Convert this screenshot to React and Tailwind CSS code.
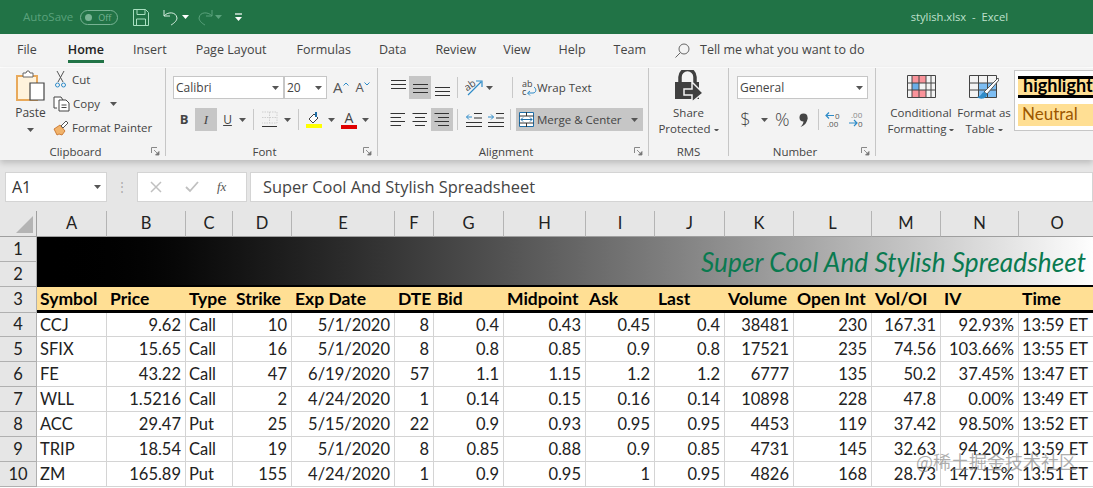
const UI = "font-['Open_Sans',sans-serif]";
const COLS = ['A','B','C','D','E','F','G','H','I','J','K','L','M','N','O'];
const HEAD = ['Symbol','Price','Type','Strike','Exp Date','DTE','Bid','Midpoint','Ask','Last','Volume','Open Int','Vol/OI','IV','Time'];
const ROWS = [
  ['CCJ','9.62','Call','10','5/1/2020','8','0.4','0.43','0.45','0.4','38481','230','167.31','92.93%','13:59 ET'],
  ['SFIX','15.65','Call','16','5/1/2020','8','0.8','0.85','0.9','0.8','17521','235','74.56','103.66%','13:55 ET'],
  ['FE','43.22','Call','47','6/19/2020','57','1.1','1.15','1.2','1.2','6777','135','50.2','37.45%','13:47 ET'],
  ['WLL','1.5216','Call','2','4/24/2020','1','0.14','0.15','0.16','0.14','10898','228','47.8','0.00%','13:49 ET'],
  ['ACC','29.47','Put','25','5/15/2020','22','0.9','0.93','0.95','0.95','4453','119','37.42','98.50%','13:52 ET'],
  ['TRIP','18.54','Call','19','5/1/2020','8','0.85','0.88','0.9','0.85','4731','145','32.63','94.20%','13:59 ET'],
  ['ZM','165.89','Put','155','4/24/2020','1','0.9','0.95','1','0.95','4826','168','28.73','147.15%','13:51 ET'],
];
const LEFT = new Set([0, 2, 14]);

const Caret = ({ className = '', color = '#555', w = 7 }) => (
  <svg width={w} height={(w * 4) / 7} viewBox="0 0 7 4" className={className}><path d="M0 0h7L3.500 4z" fill={color} /></svg>
);
const Launcher = () => (
  <svg width="9" height="9" viewBox="0 0 9 9" className="shrink-0"><path d="M.5 6V.5H6" fill="none" stroke="#888" /><path d="M3 3l4 4M8 4.500V8H4.500z" fill="#777" stroke="#777" strokeWidth=".8" /></svg>
);
const Sep = ({ h = 'h-[21px]' }) => <div className={`w-px ${h} bg-[#c8c8c8] shrink-0`} />;

function Lines({ widths, dy = 5 }) {
  return (
    <svg width="16" height="16" viewBox="0 0 16 16">
      {widths.map(([a, b], i) => <path key={i} d={`M${a} ${i * dy + 1.5}H${b}`} stroke="#333" strokeWidth="1" />)}
    </svg>
  );
}
const VLines = ({ off }) => (
  <svg width="15" height="20" viewBox="0 0 15 20">
    {[0, 1, 2].map((i) => <path key={i} d={`M0 ${off + i * 4 + .5}H15`} stroke="#333" strokeWidth="1" />)}
  </svg>
);
const HL = ({ children, on, w = 'w-[22px]' }) => (
  <div className={`${w} h-[23px] flex items-center justify-center shrink-0 ${on ? 'bg-[#c6c6c6]' : ''}`}>{children}</div>
);

function Group({ w, label, launcher, children }) {
  return (
    <div className={`${w} shrink-0 h-[88px] flex flex-col border-r border-[#c6c6c6]`}>
      <div className="flex-1 min-h-0">{children}</div>
      <div className="h-[9px] flex items-center">
        <div className="flex-1 text-center text-[11.5px] leading-none text-[#444]">{label}</div>
        {launcher && <div className="pr-[5px] flex items-center"><Launcher /></div>}
      </div>
    </div>
  );
}

function Clipboard() {
  return (
    <Group w="w-[166px]" label="Clipboard" launcher>
      <div className="flex pt-[2px]">
        <div className="w-[55px] pl-[15px] flex flex-col">
          <svg width="31" height="33" viewBox="0 0 31 33">
            <path d="M2 6h20v24H2z" fill="#fff3dc" stroke="#e8a95b" strokeWidth="2" />
            <path d="M8 6V3h3l1-2h2l1 2h3v4H8z" fill="#fff" stroke="#666" />
            <path d="M15 13h14v17H15z" fill="#fff" stroke="#444" strokeWidth="1.200" />
          </svg>
          <div className="w-[31px] text-center text-[12px] leading-none mt-[4px] text-[#444] whitespace-nowrap">Paste</div>
          <div className="w-[31px] flex justify-center mt-[9px]"><Caret /></div>
        </div>
        <div className="flex flex-col gap-[7px] text-[11.5px] leading-none text-[#444] pt-[1px]">
          <div className="h-[17px] flex items-center gap-[6px]">
            <svg width="11" height="17" viewBox="0 0 11 17"><path d="M2 0l6 11M9 0L3 11" stroke="#555" fill="none" /><circle cx="2.500" cy="14" r="2" fill="none" stroke="#2e8bc8" /><circle cx="8.500" cy="14" r="2" fill="none" stroke="#2e8bc8" /></svg>
            <span>Cut</span>
          </div>
          <div className="h-[17px] flex items-center gap-[3px] -ml-[2px]">
            <svg width="17" height="16" viewBox="0 0 17 16"><path d="M4 12H1V1h7l2 3" fill="#fff" stroke="#444" /><path d="M6 4h7l3 3v8H6z" fill="#fff" stroke="#444" /><path d="M8.500 9h5M8.500 11.500h5" stroke="#444" /></svg>
            <span>Copy</span>
            <Caret className="ml-[7px]" />
          </div>
          <div className="h-[17px] flex items-center gap-[3px] -ml-[2px]">
            <svg width="16" height="16" viewBox="0 0 16 16"><path d="M1 9l6-4 5 6-3 4-3-1-2 1z" fill="#f1b36b" stroke="#c46a1e" strokeWidth=".8" /><path d="M8 6l5-5 2 2-5 5z" fill="#fff" stroke="#555" /></svg>
            <span className="whitespace-nowrap">Format Painter</span>
          </div>
        </div>
      </div>
    </Group>
  );
}

const Combo = ({ w, text }) => (
  <div className={`${w} h-[23px] bg-white border border-[#c6c6c6] flex items-center justify-between pl-[2px] pr-[4px] text-[12px] text-[#444] shrink-0`}>
    <span>{text}</span><Caret />
  </div>
);

function Font() {
  return (
    <Group w="w-[212px]" label="Font" launcher>
      <div className="pl-[7px] pt-[8px] flex flex-col gap-[9px]">
        <div className="flex items-center">
          <Combo w="w-[111px]" text="Calibri" />
          <Combo w="w-[43px]" text="20" />
          <div className="flex items-center ml-[6px] text-[15px] leading-none text-[#555]">
            <span>A</span><svg width="6" height="4" viewBox="0 0 6 4" className="mb-[8px]"><path d="M.5 3.500L3 1l2.500 2.500" fill="none" stroke="#2e8bc8" /></svg>
            <span className="ml-[7px] text-[13px]">A</span><svg width="6" height="4" viewBox="0 0 6 4" className="mb-[8px]"><path d="M.5.5L3 3 5.500.5" fill="none" stroke="#2e8bc8" /></svg>
          </div>
        </div>
        <div className="flex items-center">
          <div className="w-[22px] text-center font-bold text-[13px] text-[#444]">B</div>
          <HL on><span className="italic text-[13px] text-[#444] font-['Liberation_Serif',serif]">I</span></HL>
          <div className="w-[21px] text-center text-[12px] underline text-[#444]">U</div>
          <Caret className="ml-[1px]" />
          <div className="w-[7px]" /><Sep />
          <svg width="17" height="17" viewBox="0 0 17 17" className="ml-[7px]"><path d="M1 1h15v11H1M8.500 1v11M1 6.500h15" fill="none" stroke="#cfcfcf" strokeDasharray="1.500 1" /><path d="M1 15.500h15" stroke="#333" /></svg>
          <Caret className="ml-[6px]" />
          <div className="w-[7px]" /><Sep />
          <svg width="17" height="17" viewBox="0 0 17 17" className="ml-[7px]"><path d="M3 8l5-5 4 4-5 5z" fill="#fff" stroke="#444" /><path d="M10 1v5" stroke="#1e6ea8" strokeWidth="2" /><rect x="0" y="13" width="16" height="4" fill="#ffff00" /></svg>
          <Caret className="ml-[5px]" />
          <div className="ml-[6px] w-[16px] flex flex-col items-center leading-none">
            <span className="text-[14px] leading-[14px] text-[#444]">A</span>
            <div className="w-[16px] h-[4px] bg-[#e00000]" />
          </div>
          <Caret className="ml-[5px]" />
        </div>
      </div>
    </Group>
  );
}

function Alignment() {
  return (
    <Group w="w-[271px]" label="Alignment" launcher>
      <div className="pl-[9px] pt-[8px] flex flex-col gap-[9px]">
        <div className="flex items-center">
          <HL><VLines off={2} /></HL>
          <HL on><VLines off={6} /></HL>
          <HL><VLines off={9} /></HL>
          <div className="w-[4px]" /><Sep />
          <svg width="18" height="17" viewBox="0 0 18 17" className="ml-[7px]"><text x="0" y="10" fontSize="10" fill="#444" transform="rotate(-35 5 8)" fontFamily="Open Sans">ab</text><path d="M3 16L16 3M11 2h6v6" fill="none" stroke="#2e8bc8" strokeWidth="1.200" /></svg>
          <Caret className="ml-[3px]" />
          <div className="w-[19px]" /><Sep />
          <div className="ml-[9px] flex items-center text-[11.5px] text-[#444]">
            <svg width="15" height="18" viewBox="0 0 15 18"><text x="0" y="7.500" fontSize="9" fill="#444" fontFamily="Open Sans">ab</text><text x="0" y="16" fontSize="9" fill="#444" fontFamily="Open Sans">c</text><path d="M12 8c3 2 2 6-1 6H6M8 12l-2.500 2L8 16.500" fill="none" stroke="#2e8bc8" /></svg>
            <span className="whitespace-nowrap">Wrap Text</span>
          </div>
        </div>
        <div className="flex items-center">
          <HL><Lines widths={[[.5,15],[.5,11],[.5,15],[.5,11]]} dy={4} /></HL>
          <HL><Lines widths={[[.5,15],[3,13],[.5,15],[3,13]]} dy={4} /></HL>
          <HL on><Lines widths={[[.5,15],[4,15],[.5,15],[4,15]]} dy={4} /></HL>
          <div className="w-[4px]" /><Sep />
          <svg width="16" height="15" viewBox="0 0 16 15" className="ml-[8px]"><path d="M8 1.500h8M8 6h8M0 10.500h16M0 14.500h16" stroke="#333" /><path d="M6 5H.5M3 2.500L.5 5 3 7.500" fill="none" stroke="#2e8bc8" /></svg>
          <svg width="16" height="15" viewBox="0 0 16 15" className="ml-[6px]"><path d="M8 1.500h8M8 6h8M0 10.500h16M0 14.500h16" stroke="#333" /><path d="M0 5h5.500M3 2.500L5.500 5 3 7.500" fill="none" stroke="#2e8bc8" /></svg>
          <div className="w-[6px]" /><Sep />
          <div className="ml-[5px] w-[127px] h-[23px] bg-[#c6c6c6] flex items-center text-[11.5px] text-[#444] pl-[3px]">
            <svg width="15" height="15" viewBox="0 0 15 15"><path d="M.5.500h14v14H.5z" fill="#fff" stroke="#1e6ea8" /><path d="M.5 4h14M.5 11h14M7.500 0v4M7.500 11v4" stroke="#333" /><path d="M2 7.500h11M4 5.500l-2 2 2 2M11 5.500l2 2-2 2" fill="none" stroke="#1e6ea8" /></svg>
            <span className="ml-[3px] whitespace-nowrap">Merge &amp; Center</span>
            <Caret className="ml-[9px]" />
          </div>
        </div>
      </div>
    </Group>
  );
}

function RMS() {
  return (
    <Group w="w-[80px]" label="RMS">
      <div className="flex flex-col items-center pt-[2px]">
        <svg width="30" height="32" viewBox="0 0 30 32">
          <path d="M6 12V7a7.500 7.500 0 0 1 15 0v5" fill="none" stroke="#404040" strokeWidth="3.500" />
          <path d="M1 12h24v17H1z" fill="#404040" />
          <path d="M10 19h8v-7l11 11-11 9v-7h-8z" fill="#404040" stroke="#f3f3f3" strokeWidth="1.500" />
        </svg>
        <div className="text-[11.5px] leading-[16px] text-[#444] text-center mt-[3px] whitespace-nowrap">Share<br />Protected <Caret w={5} className="inline align-middle" /></div>
      </div>
    </Group>
  );
}

function NumberGroup() {
  return (
    <Group w="w-[147px]" label="Number" launcher>
      <div className="pl-[8px] pt-[8px] flex flex-col gap-[9px]">
        <Combo w="w-[131px]" text="General" />
        <div className="flex items-center text-[#444]">
          <span className="w-[17px] text-center text-[18px] leading-[23px] font-light">$</span>
          <Caret className="ml-[7px]" />
          <span className="ml-[7px] text-[18px] leading-[23px] font-light">%</span>
          <svg width="9" height="14" viewBox="0 0 9 14" className="ml-[9px] shrink-0"><circle cx="4.500" cy="4.500" r="4" fill="#444" /><path d="M8.500 4.500C8.500 9 6 12.500 1.500 14C4 11.500 4.500 9.500 4.500 8z" fill="#444" /></svg>
          <div className="w-[10px]" /><Sep />
          <svg width="18" height="17" viewBox="0 0 18 17" className="ml-[6px]"><path d="M9 4.500H1M4 1.500L1 4.500l3 3" fill="none" stroke="#2e8bc8" strokeWidth="1.200" /><text x="10" y="8" fontSize="8" fill="#555" fontFamily="Open Sans">0</text><text x="2" y="16" fontSize="8" fill="#555" fontFamily="Open Sans">.00</text></svg>
          <svg width="18" height="17" viewBox="0 0 18 17" className="ml-[5px]"><text x="3" y="7" fontSize="8" fill="#888" fontFamily="Open Sans">.00</text><path d="M1 12h8M6 9l3 3-3 3" fill="none" stroke="#2e8bc8" strokeWidth="1.200" /><text x="10" y="16" fontSize="8" fill="#555" fontFamily="Open Sans">0</text></svg>
        </div>
      </div>
    </Group>
  );
}

function Styles() {
  return (
    <div className="flex-1 h-[88px] flex min-w-0">
      <div className="w-[90px] shrink-0 flex flex-col items-center pt-[7px]">
        <svg width="29" height="23" viewBox="0 0 29 23">
          <path d="M5 1h14v7h-7v7h7v7H5z" fill="#f9939a" />
          <path d="M5 8h7v7H5z" fill="#6aaee8" />
          <path d="M.5.500h28v22H.5zM.5 8h28M.5 15h28M5 .5v22M12 .5v22M19 .5v22M24 .5v22" fill="none" stroke="#444" />
        </svg>
        <div className="text-[11.5px] leading-[16px] text-[#444] text-center mt-[7px] whitespace-nowrap">Conditional<br />Formatting <Caret w={5} className="inline align-middle" /></div>
      </div>
      <div className="w-[54px] shrink-0 -ml-[9px] flex flex-col items-center pt-[7px]">
        <svg width="30" height="27" viewBox="0 0 30 27">
          <path d="M10 8h18v15H10z" fill="#7dbdf2" />
          <path d="M.5.500h27v22H.5zM.5 8h27M.5 15h27M9.500 .5v22M18.500 .5v22" fill="none" stroke="#444" />
          <path d="M29 3L15 17l3 2L30 5z" fill="#fff" stroke="#555" />
          <path d="M15 17c-3 1-2 4-7 5 3 3 10 2 10-3z" fill="#2e8bc8" />
        </svg>
        <div className="text-[11.5px] leading-[16px] text-[#444] text-center mt-[3px] whitespace-nowrap">Format as<br />Table <Caret w={5} className="inline align-middle" /></div>
      </div>
      <div className="ml-[3px] mt-[2px] w-[90px] shrink-0 h-[61px] bg-white border border-[#c6c6c6] pl-[3px] pt-[5px] flex flex-col gap-[6px]">
        <div className="h-[22px] bg-[#ffdf94] border-y-[3px] border-black text-[18px] leading-[13px] font-bold text-black pl-[5px] font-['Lato',sans-serif] whitespace-nowrap">highlight</div>
        <div className="h-[22px] bg-[#ffdf94] text-[17px] leading-[19px] text-[#9c5700] pl-[4px] font-['Lato',sans-serif]">Neutral</div>
      </div>
    </div>
  );
}

function TitleBar() {
  return (
    <div className={`h-[34px] bg-[#217346] flex items-center relative ${UI}`}>
      <span className="ml-[23px] text-[11.5px] text-[#5aa27c]">AutoSave</span>
      <div className="ml-[7px] w-[38px] h-[15px] rounded-full border border-[#78b394] flex items-center pl-[4px] gap-[6px]">
        <div className="w-[7px] h-[7px] rounded-full bg-[#78b394]" />
        <span className="text-[9px] leading-none text-[#78b394]">Off</span>
      </div>
      <svg width="16" height="17" viewBox="0 0 16 17" className="ml-[15px]"><path d="M.5.500h12l3 3v13H.5z M4 .5v5h8v-5M3.500 16.500V10h9v6.500" fill="none" stroke="#a8e0c0" strokeWidth="1" /></svg>
      <svg width="16" height="17" viewBox="0 0 16 17" className="ml-[14px]"><path d="M1 1v6h6M1 7c3-4 12-5 13 2 0 3-4 6-6 7" fill="none" stroke="#d7eee0" strokeWidth="1" /></svg>
      <Caret className="ml-[3px]" color="#fff" />
      <svg width="16" height="17" viewBox="0 0 16 17" className="ml-[8px]"><path d="M15 1v6H9M15 7C12 3 3 2 2 9c0 3 4 6 6 7" fill="none" stroke="#5aa27c" strokeWidth="1" /></svg>
      <Caret className="ml-[2px]" color="#5aa27c" />
      <svg width="7" height="8" viewBox="0 0 7 8" className="ml-[13px]"><path d="M0 1h7" stroke="#fff" strokeWidth="1.200" /><path d="M0 4h7L3.500 8z" fill="#fff" /></svg>
      <span className="ml-auto mr-[85px] text-[11.2px] text-[#bfe0cd] whitespace-nowrap">stylish.xlsx&nbsp; -&nbsp; Excel</span>
    </div>
  );
}

function Tabs() {
  const tabs = ['File','Home','Insert','Page Layout','Formulas','Data','Review','View','Help','Team'];
  const gaps = ['ml-[17px]','ml-[31px]','ml-[29px]','ml-[29px]','ml-[30px]','ml-[28px]','ml-[29px]','ml-[27px]','ml-[28px]','ml-[28px]'];
  return (
    <div className={`h-[33px] pb-[1px] mb-[1px] flex items-center text-[12.5px] text-[#444] bg-[#f3f3f3] ${UI}`}>
      {tabs.map((t, i) => (
        <div key={t} className={`${gaps[i]} relative whitespace-nowrap ${t === 'Home' ? 'font-semibold text-[#222]' : ''}`}>
          {t}
          {t === 'Home' && <div className="absolute left-0 right-0 -bottom-[4px] h-[3px] bg-[#217346]" />}
        </div>
      ))}
      <svg width="15" height="15" viewBox="0 0 15 15" className="ml-[29px]"><circle cx="9" cy="6" r="5" fill="none" stroke="#666" /><path d="M5.500 9.500L.5 14.500" stroke="#666" /></svg>
      <span className="ml-[10px]">Tell me what you want to do</span>
    </div>
  );
}

function FormulaBar() {
  return (
    <div className={`h-[51px] bg-[#e6e6e6] pt-[12px] pl-[5px] flex items-start ${UI}`}>
      <div className="w-[102px] h-[30px] bg-white border border-[#d4d4d4] flex items-center justify-between pl-[6px] pr-[5px] text-[16px] text-[#333]">
        <span>A1</span><Caret />
      </div>
      <div className="w-[30px] h-[30px] flex items-center justify-center text-[12px] text-[#aaa] leading-none">⋮</div>
      <div className="w-[110px] h-[30px] bg-white border border-[#d4d4d4] flex items-center pl-[12px]">
        <svg width="12" height="12" viewBox="0 0 12 12"><path d="M1 1l10 10M11 1L1 11" stroke="#c0c0c0" strokeWidth="1.500" /></svg>
        <svg width="14" height="12" viewBox="0 0 14 12" className="ml-[23px]"><path d="M1 6l4 4 8-9" fill="none" stroke="#c0c0c0" strokeWidth="1.800" /></svg>
        <span className="ml-[18px] italic text-[13px] text-[#555] font-['Liberation_Serif',serif]">fx</span>
      </div>
      <div className="ml-[3px] flex-1 h-[30px] bg-white border border-[#d4d4d4] flex items-center pl-[12px] text-[16.4px] text-[#444] whitespace-nowrap">
        Super Cool And Stylish Spreadsheet
      </div>
    </div>
  );
}

function Sheet() {
  const RH = "bg-[#e6e6e6] border-r border-b border-[#b0b0b0] flex items-center justify-center text-[16.5px] text-[#222]";
  return (
    <div className="grid grid-cols-[37px_70px_79px_47px_59px_103px_39px_70px_82px_69px_70px_69px_78px_69px_78px_77px] grid-rows-[26px_25px_25px_26px_24px_25px_25px_25px_25px_25px_25px] font-['Lato',sans-serif] overflow-hidden bg-white">
      <div className="bg-[#e6e6e6] border-r border-b border-[#9f9f9f] flex items-end justify-end pr-[3px] pb-[3px]">
        <svg width="17" height="17" viewBox="0 0 17 17"><path d="M17 0v17H0z" fill="#b4b4b4" /></svg>
      </div>
      {COLS.map((c) => (
        <div key={c} className="bg-[#e6e6e6] border-r border-b border-r-[#b4b4b4] border-b-[#9f9f9f] flex items-center justify-center text-[16.5px] text-[#222]">{c}</div>
      ))}
      <div className={RH}>1</div>
      <div className="col-span-15 row-span-2 border-b-[2px] border-black bg-gradient-to-r from-black to-white flex items-center justify-end pr-[10px] pt-[2px]">
        <span className="italic text-[26.2px] leading-none tracking-[0.05px] text-[#0a7a50] whitespace-nowrap">Super Cool And Stylish Spreadsheet</span>
      </div>
      <div className={RH}>2</div>
      <div className={RH}>3</div>
      {HEAD.map((h) => (
        <div key={h} className="bg-[#ffdf94] border-b-[3px] border-black pl-[3px] text-[17.5px] leading-[23px] font-bold text-black whitespace-nowrap">{h}</div>
      ))}
      {ROWS.map((r, i) => [
        <div key={`h${i}`} className={RH}>{i + 4}</div>,
        ...r.map((v, j) => (
          <div key={`${i}-${j}`} className={`border-r border-b border-[#d4d4d4] pl-[3px] pr-[4px] text-[16.5px] leading-[24px] text-[#222] whitespace-nowrap ${LEFT.has(j) ? 'text-left' : 'text-right'}`}>{v}</div>
        )),
      ])}
    </div>
  );
}

export default function App() {
  return (
    <div className="w-[1093px] h-[488px] overflow-hidden relative bg-white">
      <TitleBar />
      <Tabs />
      <div className={`h-[92px] bg-[#f3f3f3] flex items-start relative z-10 shadow-[0_3px_6px_rgba(0,0,0,0.18)] ${UI}`}>
        <Clipboard />
        <Font />
        <Alignment />
        <RMS />
        <NumberGroup />
        <Styles />
      </div>
      <FormulaBar />
      <Sheet />
      <div className="absolute left-[916px] top-[448px] text-[18px] text-[#8a8a8a]/70 font-['Noto_Sans_CJK_SC',sans-serif] whitespace-nowrap">@稀土掘金技术社区</div>
    </div>
  );
}
